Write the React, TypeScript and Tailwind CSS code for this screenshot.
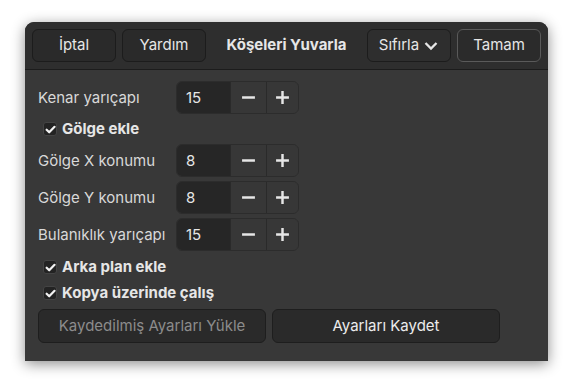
import React from 'react';

const font = { fontFamily: 'Inter, "Noto Sans", sans-serif' };

const HeaderButton = ({ children, className = '' }: { children: React.ReactNode; className?: string }) => (
  <button
    className={`h-[33px] w-[84px] rounded-[6px] border flex items-center justify-center text-[15px] text-[#e6e6e6] ${className}`}
  >
    {children}
  </button>
);

const SpinRow = ({ label, value }: { label: string; value: string }) => (
  <div className="flex items-center h-[33px]">
    <div className="w-[138px] pt-[2px] text-[15px] text-[#d9d9d9]">{label}</div>
    <div className="flex h-[33px] w-[123px] rounded-[6px] border border-[#2c2c2c] overflow-hidden">
      <div className="w-[53px] bg-[#262626] flex items-center pl-[9px] pt-[2px] text-[15px] text-[#e6e6e6]">{value}</div>
      <div className="w-[36px] bg-[#373737] border-l border-[#2a2a2a] flex items-center justify-center">
        <svg width="15" height="15" viewBox="0 0 14 14">
          <path d="M1 7h12" stroke="#e6e6e6" strokeWidth="2.3" />
        </svg>
      </div>
      <div className="flex-1 bg-[#373737] border-l border-[#2a2a2a] flex items-center justify-center">
        <svg width="15" height="15" viewBox="0 0 14 14">
          <path d="M1 7h12M7 1v12" stroke="#e6e6e6" strokeWidth="2.3" />
        </svg>
      </div>
    </div>
  </div>
);

const CheckRow = ({ label, className = '' }: { label: string; className?: string }) => (
  <div className={`flex items-center gap-[5px] pl-[5px] ${className}`}>
    <div className="w-[14px] h-[14px] rounded-[3px] bg-[#232323] border border-[#444444] flex items-center justify-center">
      <svg width="11" height="11" viewBox="0 0 12 12">
        <path d="M1.8 6.3l2.8 2.8 5.8-6" fill="none" stroke="#f2f2f2" strokeWidth="2.4" strokeLinecap="round" strokeLinejoin="round" />
      </svg>
    </div>
    <span className="pt-[1px] text-[15px] font-bold text-[#e6e6e6]">{label}</span>
  </div>
);

export default function App() {
  return (
    <div className="w-[573px] h-[389px] bg-white pt-[22px] pl-[25px]" style={font}>
      <div className="w-[523px] h-[339px] bg-[#383838] rounded-t-[9px] shadow-[0_3px_14px_rgba(0,0,0,0.45)] flex flex-col overflow-hidden">
        <div className="h-[48px] bg-[#2e2e2e] border-b border-[#1c1c1c] flex items-center px-[7px]">
          <div className="flex gap-[6px]">
            <HeaderButton className="bg-[#2a2a2a] border-[#1c1c1c]">İptal</HeaderButton>
            <HeaderButton className="bg-[#2a2a2a] border-[#1c1c1c]">Yardım</HeaderButton>
          </div>
          <div className="flex-1 text-center text-[15px] font-bold text-[#e6e6e6]">Köşeleri Yuvarla</div>
          <div className="flex gap-[6px]">
            <HeaderButton className="bg-[#2e2e2e] border-[#1c1c1c] gap-[4px]">
              Sıfırla
              <svg width="16" height="16" viewBox="0 0 16 16">
                <path d="M2.5 5l5.5 5.5 5.5-5.5" fill="none" stroke="#e6e6e6" strokeWidth="2.3" />
              </svg>
            </HeaderButton>
            <HeaderButton className="bg-[#2b2b2b] border-[#5a5a5a]">Tamam</HeaderButton>
          </div>
        </div>
        <div className="flex flex-col px-[13px] pt-[11px]">
          <SpinRow label="Kenar yarıçapı" value="15" />
          <CheckRow label="Gölge ekle" className="h-[30px]" />
          <div className="flex flex-col gap-[4px]">
            <SpinRow label="Gölge X konumu" value="8" />
            <SpinRow label="Gölge Y konumu" value="8" />
            <SpinRow label="Bulanıklık yarıçapı" value="15" />
          </div>
          <CheckRow label="Arka plan ekle" className="h-[32px]" />
          <CheckRow label="Kopya üzerinde çalış" className="h-[20px]" />
          <div className="flex gap-[6px] mt-[6px]">
            <button className="h-[34px] w-[228px] rounded-[6px] bg-[#2a2a2a] border border-[#1e1e1e] text-[15px] text-[#8c8c8c]">
              Kaydedilmiş Ayarları Yükle
            </button>
            <button className="h-[34px] w-[228px] rounded-[6px] bg-[#2a2a2a] border border-[#1e1e1e] text-[15px] text-[#ececec]">
              Ayarları Kaydet
            </button>
          </div>
        </div>
      </div>
    </div>
  );
}
